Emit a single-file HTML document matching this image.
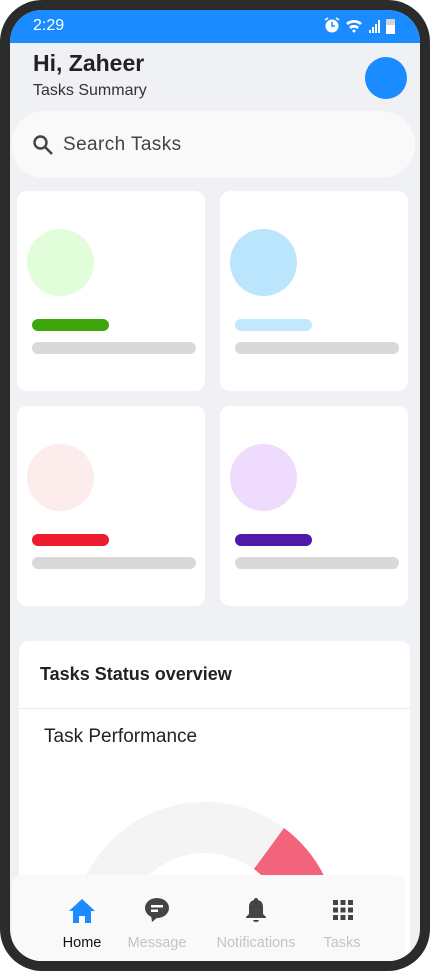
<!DOCTYPE html>
<html><head><meta charset="utf-8"><style>
*{margin:0;padding:0;box-sizing:border-box}
body{width:430px;height:971px;background:#fff;font-family:"Liberation Sans",sans-serif;position:relative;overflow:hidden}
.frame{position:absolute;left:0;top:0;width:430px;height:971px;border-radius:42px;background:#2b2b2b}
.screen{position:absolute;left:10px;top:10px;width:410px;height:951px;border-radius:32px;background:#f0f1f5;overflow:hidden}
.status{position:absolute;left:0;top:0;width:410px;height:33px;background:#1a8cff;color:#fff;font-size:16px}
.abs{position:absolute}
.card{position:absolute;background:#fff;border-radius:10px;width:188px;height:200px}
.circ{position:absolute;left:10px;top:38px;width:67px;height:67px;border-radius:50%}
.bar1{position:absolute;left:15px;top:128px;width:77px;height:12px;border-radius:6px}
.bar2{position:absolute;left:15px;top:151px;width:164px;height:12px;border-radius:6px;background:#d9d9d9}
.nav{position:absolute;left:2px;top:865px;width:393px;height:90px;background:#f9f9f9;border-radius:10px 10px 0 0}
.lbl{position:absolute;top:60px;font-size:14.5px;color:#c4c4c8;width:120px;text-align:center}
</style></head><body>
<div class="frame"></div>
<div class="screen">
 <div class="status">
  <span class="abs" style="left:23px;top:7px">2:29</span>
  <svg class="abs" style="left:313px;top:7px" width="80" height="20" viewBox="0 0 80 20">
   <circle cx="9" cy="9" r="6.5" fill="#fff"/><path d="M9 5v4h3" stroke="#1a8cff" stroke-width="1.5" fill="none"/>
   <path d="M2 3l3-2M16 3l-3-2" stroke="#fff" stroke-width="1.5"/>
   <path d="M23 6a12 12 0 0 1 16 0l-2 2a9 9 0 0 0-12 0zM26 10a7 7 0 0 1 10 0l-2 2a4 4 0 0 0-6 0z" fill="#fff"/><circle cx="31" cy="14" r="1.5" fill="#fff"/>
   <rect x="46" y="13" width="2" height="3" fill="#fff"/><rect x="49" y="10" width="2" height="6" fill="#fff"/><rect x="52" y="7" width="2" height="9" fill="#fff"/><rect x="55" y="3" width="2" height="13" fill="#fff"/>
   <rect x="63" y="2" width="9" height="15" rx="1" fill="#cfd5dc"/><rect x="63" y="8" width="9" height="9" fill="#fff"/>
  </svg>
 </div>
 <div class="abs" style="left:23px;top:40px;font-size:23px;font-weight:bold;color:#222">Hi, Zaheer</div>
 <div class="abs" style="left:23px;top:72px;font-size:16px;color:#333">Tasks Summary</div>
 <div class="abs" style="left:355px;top:47px;width:42px;height:42px;border-radius:50%;background:#1a8cff"></div>
 <div class="abs" style="left:1px;top:101px;width:404px;height:67px;border-radius:34px;background:#f9f9fa"></div>
 <svg class="abs" style="left:21px;top:123px" width="24" height="24" viewBox="0 0 24 24"><circle cx="9.5" cy="9.5" r="6" stroke="#444" stroke-width="2.4" fill="none"/><path d="M14 14l7 7" stroke="#444" stroke-width="2.6"/></svg>
 <div class="abs" style="left:53px;top:124px;font-size:19px;color:#444;letter-spacing:.4px">Search Tasks</div>

 <div class="card" style="left:7px;top:181px"><div class="circ" style="background:#e2fdd9"></div><div class="bar1" style="background:#3ea50a"></div><div class="bar2"></div></div>
 <div class="card" style="left:210px;top:181px"><div class="circ" style="background:#bbe4fd"></div><div class="bar1" style="background:#c2e8fd"></div><div class="bar2"></div></div>
 <div class="card" style="left:7px;top:396px"><div class="circ" style="background:#fdecec"></div><div class="bar1" style="background:#ee1c2c"></div><div class="bar2"></div></div>
 <div class="card" style="left:210px;top:396px"><div class="circ" style="background:#efdbfd"></div><div class="bar1" style="background:#5119a8"></div><div class="bar2"></div></div>

 <div class="abs" style="left:9px;top:631px;width:391px;height:330px;background:#fff;border-radius:10px"></div>
 <div class="abs" style="left:30px;top:654px;font-size:18px;font-weight:bold;color:#222">Tasks Status overview</div>
 <div class="abs" style="left:9px;top:698px;width:391px;height:1px;background:#e8e8e8"></div>
 <div class="abs" style="left:34px;top:716px;font-size:19px;color:#222">Task Performance</div>
 <svg class="abs" style="left:0;top:0" width="410" height="951">
  <path d="M62 925A133 133 0 0 1 328 925L277 925A82 82 0 0 0 113 925Z" fill="#f4f4f4"/>
  <path d="M274 818A133 133 0 0 1 328 925L277 925A82 82 0 0 0 244 859Z" fill="#f2647c"/>
 </svg>

 <div class="nav">
  <svg class="abs" style="left:56px;top:23px" width="28" height="26" viewBox="0 0 28 26"><path d="M14 1L1 13h4v12h6v-7h6v7h6V13h4z" fill="#1a8cff"/></svg>
  <div class="lbl" style="left:10px;color:#111">Home</div>
  <svg class="abs" style="left:132px;top:22px" width="26" height="26" viewBox="0 0 26 26"><ellipse cx="13" cy="11" rx="12" ry="10" fill="#444"/><path d="M7 18l1 7 6-5z" fill="#444"/><rect x="7" y="8" width="12" height="2.5" fill="#fff"/><rect x="7" y="12.5" width="7" height="2.5" fill="#fff"/></svg>
  <div class="lbl" style="left:85px">Message</div>
  <svg class="abs" style="left:231px;top:22px" width="26" height="26" viewBox="0 0 26 26"><path d="M13 1c1.5 0 2 1 2 2 4 1 5 4 5 7v7l3 3v1H3v-1l3-3v-7c0-3 1-6 5-7 0-1 .5-2 2-2z" fill="#444"/><path d="M10 23h6a3 2 0 0 1-6 0z" fill="#444"/></svg>
  <div class="lbl" style="left:184px">Notifications</div>
  <svg class="abs" style="left:320px;top:24px" width="22" height="22" viewBox="0 0 22 22" fill="#444"><rect x="1" y="1" width="5" height="5"/><rect x="8.5" y="1" width="5" height="5"/><rect x="16" y="1" width="5" height="5"/><rect x="1" y="8.5" width="5" height="5"/><rect x="8.5" y="8.5" width="5" height="5"/><rect x="16" y="8.5" width="5" height="5"/><rect x="1" y="16" width="5" height="5"/><rect x="8.5" y="16" width="5" height="5"/><rect x="16" y="16" width="5" height="5"/></svg>
  <div class="lbl" style="left:270px">Tasks</div>
 </div>
</div>
</body></html>
